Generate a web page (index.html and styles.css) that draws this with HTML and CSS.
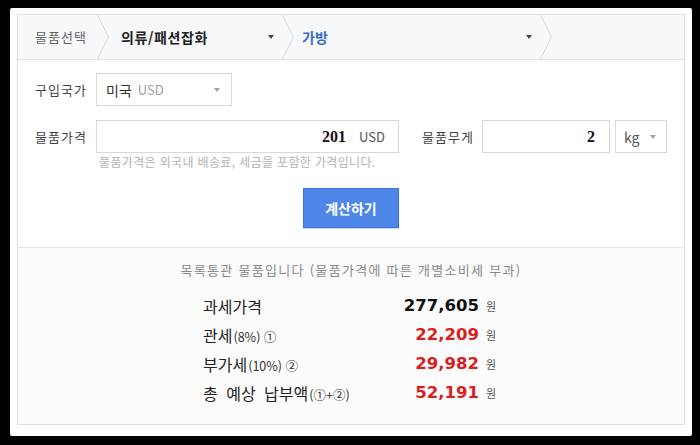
FILE: index.html
```html
<!DOCTYPE html>
<html lang="ko">
<head>
    <meta charset="UTF-8">
    <meta name="viewport" content="width=device-width, initial-scale=1.0">
    <title>관부가세 계산기</title>
    <link rel="stylesheet" href="styles.css">
</head>
<body>

    <div class="frame">
        <div class="calc">
            <div class="crumbs">
                <div class="crumb crumb-first">물품선택</div>
                <svg class="chev" width="12" height="44" viewBox="0 0 12 44"><polyline points="0.5,0 11.5,22 0.5,44"/></svg>
                <div class="crumb crumb-cat">의류/패션잡화<span class="caret"></span></div>
                <svg class="chev" width="12" height="44" viewBox="0 0 12 44"><polyline points="0.5,0 11.5,22 0.5,44"/></svg>
                <div class="crumb crumb-sub">가방<span class="caret"></span></div>
                <svg class="chev" width="12" height="44" viewBox="0 0 12 44"><polyline points="0.5,0 11.5,22 0.5,44"/></svg>
            </div>

            <div class="form">
                <div class="row">
                    <span class="label">구입국가</span>
                    <div class="select select-country">
                        <span class="sel-main">미국</span>
                        <span class="sel-sub">USD</span>
                        <span class="caret caret-light"></span>
                    </div>
                </div>
                <div class="row row-price">
                    <span class="label">물품가격</span>
                    <div class="field field-price">
                        <span class="value">201</span>
                        <span class="unit">USD</span>
                    </div>
                    <span class="label label-weight">물품무게</span>
                    <div class="field field-weight">
                        <span class="value">2</span>
                    </div>
                    <div class="select select-unit">
                        <span class="sel-kg">kg</span>
                        <span class="caret caret-light"></span>
                    </div>
                </div>
                <p class="hint">물품가격은 외국내 배송료, 세금을 포함한 가격입니다.</p>
                <div class="actions">
                    <button class="btn-calc">계산하기</button>
                </div>
            </div>

            <div class="result">
                <p class="notice">목록통관 물품입니다 (물품가격에 따른 개별소비세 부과)</p>
                <div class="sums">
                    <span class="sum-label">과세가격</span>
                    <span class="sum-num">277,605</span>
                    <span class="won">원</span>

                    <span class="sum-label">관세<small>(8%) ①</small></span>
                    <span class="sum-num red">22,209</span>
                    <span class="won">원</span>

                    <span class="sum-label">부가세<small>(10%) ②</small></span>
                    <span class="sum-num red">29,982</span>
                    <span class="won">원</span>

                    <span class="sum-label total">총 예상 납부액<small>(①+②)</small></span>
                    <span class="sum-num red">52,191</span>
                    <span class="won">원</span>
                </div>
            </div>
        </div>
    </div>

</body>
</html>
```

FILE: styles.css
```css
body {
    margin: 0;
    padding: 8px 0 0 10px;
    height: 445px;
    box-sizing: border-box;
    overflow: hidden;
    background: #000;
    font-family: "Noto Sans CJK KR", "Noto Sans", sans-serif;
    color: #333;
}
.frame {
    width: 682px;
    height: 428px;
    padding: 6px 7px 11px 7px;
    box-sizing: border-box;
    background: #fff;
    border-radius: 2px;
}
.calc {
    height: 100%;
    border: 1px solid #dedede;
    box-sizing: border-box;
    display: flex;
    flex-direction: column;
}

/* breadcrumb */
.crumbs {
    display: flex;
    height: 44px;
    background: #f7f8fa;
    border-bottom: 1px solid #e3e3e3;
}
.crumb {
    display: flex;
    align-items: center;
    box-sizing: border-box;
    font-size: 14px;
    line-height: 44px;
}
.crumb-first {
    width: 79px;
    padding-left: 17px;
    font-size: 13px;
    letter-spacing: 1px;
    color: #666;
}
.crumb-cat {
    width: 173px;
    padding-left: 12px;
    font-weight: 700;
    letter-spacing: 0.6px;
    color: #222;
}
.crumb-sub {
    width: 246px;
    padding-left: 8px;
    font-weight: 700;
    color: #3a6cc2;
}
.chev {
    flex: none;
}
.chev polyline {
    fill: none;
    stroke: #d8d8d8;
    stroke-width: 1;
}
.caret {
    width: 0;
    height: 0;
    margin-left: auto;
    margin-right: 8px;
    border-left: 3px solid transparent;
    border-right: 3px solid transparent;
    border-top: 4px solid #444;
}
.caret-light {
    border-top-color: #a0a0a0;
}

/* form */
.form {
    padding: 13px 0 19px 17px;
}
.row {
    display: flex;
    align-items: center;
}
.row-price {
    margin-top: 14px;
}
.label {
    width: 61px;
    flex: none;
    font-size: 13px;
    letter-spacing: 1px;
    color: #444;
}
.label-weight {
    width: 60px;
    margin-left: 23px;
}
.select, .field {
    display: flex;
    align-items: center;
    height: 33px;
    box-sizing: border-box;
    border: 1px solid #d9d9d9;
    background: #fff;
}
.select-country {
    width: 136px;
    padding-left: 9px;
}
.select-country .caret {
    margin-right: 11px;
}
.sel-main {
    font-size: 14px;
    color: #333;
}
.sel-sub {
    margin-left: 6px;
    font-size: 13px;
    color: #a0a0a0;
}
.field {
    justify-content: flex-end;
    padding-right: 13px;
}
.field-price {
    width: 303px;
}
.field-weight {
    width: 128px;
    padding-right: 14px;
}
.value {
    font-family: "Liberation Serif", serif;
    font-weight: 700;
    font-size: 16px;
    color: #111;
}
.unit {
    margin-left: 13px;
    font-size: 13px;
    color: #555;
}
.select-unit {
    width: 52px;
    margin-left: 5px;
    padding-left: 8px;
}
.select-unit .caret {
    margin-right: 10px;
}
.sel-kg {
    font-size: 14px;
    color: #555;
}
.hint {
    margin: 1px 0 0 64px;
    font-size: 12px;
    line-height: 16px;
    letter-spacing: 0.35px;
    color: #b3b3b3;
}
.actions {
    display: flex;
    justify-content: center;
    margin-top: 18px;
    padding-right: 17px;
}
.btn-calc {
    width: 96px;
    height: 40px;
    border: 1px solid #3e72d2;
    background: #4e87e8;
    color: #fff;
    font-family: inherit;
    font-size: 14px;
    font-weight: 700;
    box-shadow: 0 1px 1px rgba(0, 0, 0, 0.15);
}

/* result */
.result {
    flex: 1;
    border-top: 1px solid #e6e6e6;
    background: #fbfbfb;
    padding-top: 12px;
}
.notice {
    margin: 0;
    text-align: center;
    font-size: 13px;
    line-height: 20px;
    letter-spacing: 1.3px;
    color: #8a8a8a;
}
.sums {
    display: grid;
    grid-template-columns: 1fr auto auto;
    grid-auto-rows: 29px;
    align-items: center;
    column-gap: 7px;
    width: 293px;
    margin: 11px 0 0 185px;
}
.sum-label {
    font-size: 16px;
    color: #222;
}
.sum-label small {
    font-size: 12.5px;
    margin-left: 1px;
    color: #333;
}
.sum-label.total {
    word-spacing: 4px;
}
.sum-label.total small {
    word-spacing: 0;
}
.sum-num {
    font-family: "DejaVu Sans", sans-serif;
    font-weight: 700;
    font-size: 16.5px;
    color: #111;
    text-align: right;
}
.sum-num.red {
    color: #d81e1e;
}
.won {
    font-size: 11px;
    color: #555;
}
```
